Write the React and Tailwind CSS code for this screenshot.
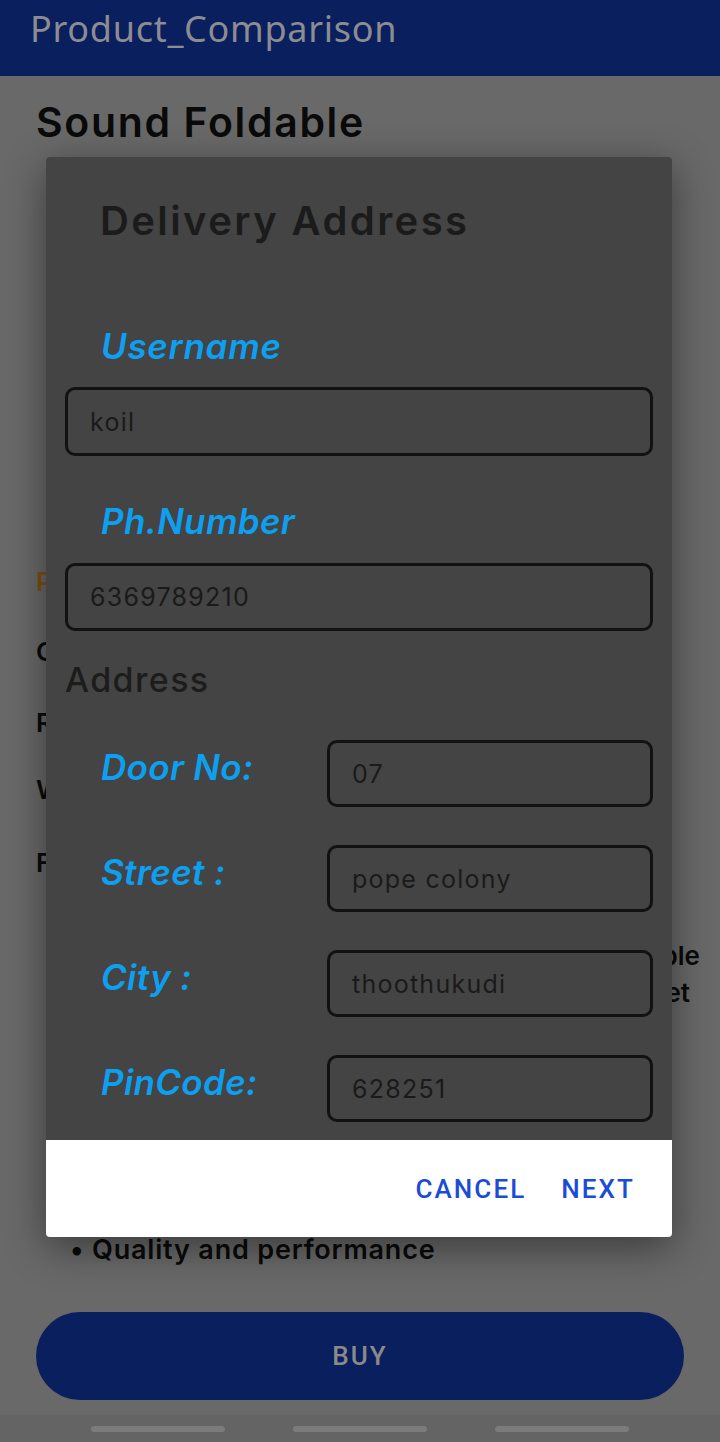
import { useState } from 'react';

// Specs rows sitting behind the dialog (only first letters peek out)
const specs = [
    { label: 'Price : Rs. 1,299', color: 'text-[#7d5010]', mt: 'mt-[24px]' },
    { label: 'Colour : Black', color: 'text-[#0a0a0a]', mt: 'mt-[44px]' },
    { label: 'Rating : 4.1', color: 'text-[#0a0a0a]', mt: 'mt-[45px]' },
    { label: 'Weight : 180g', color: 'text-[#0a0a0a]', mt: 'mt-[41px]' },
    { label: 'Features :', color: 'text-[#0a0a0a]', mt: 'mt-[47px]' },
];

const addressRows = [
    { key: 'door', label: 'Door No:' },
    { key: 'street', label: 'Street :' },
    { key: 'city', label: 'City :' },
    { key: 'pin', label: 'PinCode:' },
];

export default function App() {
    // Form values for the delivery address dialog
    const [form, setForm] = useState({
        username: 'koil',
        phone: '6369789210',
        door: '07',
        street: 'pope colony',
        city: 'thoothukudi',
        pin: '628251',
    });
    const [showDialog, setShowDialog] = useState(true);

    const update = (key) => (e) => setForm((prev) => ({ ...prev, [key]: e.target.value }));

    const inputClass =
        "w-full bg-transparent border-[3px] border-[#121212] rounded-[10px] px-[22px] text-[25px] tracking-[0.05em] text-[#1a1a1a] outline-none font-['Inter',sans-serif]";

    return (
        <div className="relative flex h-[1442px] flex-col overflow-hidden bg-[#696969] font-['Inter',sans-serif] text-[#0a0a0a]">
            {/* App bar */}
            <header className="relative z-10 flex h-[76px] shrink-0 items-start bg-[#0a1f5e] px-[30px] pt-[11px]">
                <h1 className="font-['Noto_Sans',sans-serif] text-[36px] leading-none tracking-[0.02em] text-[#8c8d92]">
                    Product_Comparison
                </h1>
            </header>

            {/* Product page (dimmed behind the dialog) */}
            <main className="flex flex-1 flex-col px-[36px]">
                <h2 className="mt-[26px] text-[41px] font-semibold leading-none tracking-[0.04em]">Sound Foldable</h2>
                <div className="mt-[22px] h-[380px]" />

                {specs.map((s) => (
                    <p key={s.label} className={`${s.mt} ${s.color} text-[26px] font-semibold leading-none`}>
                        {s.label}
                    </p>
                ))}

                <p className="mt-[67px] -mr-[16px] text-right text-[26px] font-semibold leading-none">• Foldable and comfortable</p>
                <p className="mt-[11px] -mr-[6px] text-right text-[26px] font-semibold leading-none">• Lightweight headset</p>

                <p className="mt-[230px] pl-[34px] text-[27px] font-semibold leading-none tracking-[0.03em]">• Quality and performance</p>

                <button className="mt-[49px] flex h-[88px] w-full items-center justify-center rounded-full bg-[#0a1f5e]">
                    <span className="font-['Roboto',sans-serif] text-[26px] font-medium leading-none tracking-[0.08em] text-[#8a8a8a]">BUY</span>
                </button>
            </main>

            {/* System navigation bar */}
            <nav className="flex h-[27px] shrink-0 items-center justify-between bg-[#646464] px-[91px]">
                <span className="h-[6px] w-[134px] rounded-full bg-[#7c7c7c]" />
                <span className="h-[6px] w-[134px] rounded-full bg-[#7c7c7c]" />
                <span className="h-[6px] w-[134px] rounded-full bg-[#7c7c7c]" />
            </nav>

            {/* Delivery address dialog */}
            {showDialog && (
                <div className="absolute inset-0 z-20 flex items-start pl-[46px] pt-[157px]">
                    <div className="w-[626px] overflow-hidden rounded-[4px] shadow-[0_10px_40px_rgba(0,0,0,0.45)]">
                        <div className="flex flex-col bg-[#444444] px-[19px] pt-[44px] pb-[18px]">
                            <h3 className="ml-[35px] text-[40px] font-semibold leading-none tracking-[0.06em] text-[#1b1b1b]">
                                Delivery Address
                            </h3>

                            <label className="mt-[88px] ml-[36px] text-[35px] font-semibold italic leading-none tracking-[0.02em] text-[#0d9ff0]">
                                Username
                            </label>
                            <input className={`mt-[23px] h-[69px] ${inputClass}`} value={form.username} onChange={update('username')} />

                            <label className="mt-[48px] ml-[36px] text-[35px] font-semibold italic leading-none tracking-[0.01em] text-[#0d9ff0]">
                                Ph.Number
                            </label>
                            <input className={`mt-[24px] h-[68px] ${inputClass}`} value={form.phone} onChange={update('phone')} />

                            <h4 className="mt-[32px] text-[34px] font-medium leading-none tracking-[0.04em] text-[#1c1c1c]">Address</h4>

                            <div className="mt-[43px] flex flex-col gap-[38px]">
                                {addressRows.map((row) => (
                                    <div key={row.key} className="flex h-[67px] items-center">
                                        <label className="mb-[12px] w-[262px] shrink-0 pl-[36px] text-[35px] font-semibold italic leading-none tracking-[0.01em] text-[#0d9ff0]">
                                            {row.label}
                                        </label>
                                        <input className={`h-[67px] ${inputClass}`} value={form[row.key]} onChange={update(row.key)} />
                                    </div>
                                ))}
                            </div>
                        </div>

                        {/* Dialog buttons */}
                        <div className="flex h-[97px] items-center justify-end gap-[35px] bg-white pr-[37px]">
                            <button
                                onClick={() => setShowDialog(false)}
                                className="font-['Roboto',sans-serif] text-[26px] font-medium leading-none tracking-[0.08em] text-[#1b4cd6]"
                            >
                                CANCEL
                            </button>
                            <button className="font-['Roboto',sans-serif] text-[26px] font-medium leading-none tracking-[0.08em] text-[#1b4cd6]">
                                NEXT
                            </button>
                        </div>
                    </div>
                </div>
            )}
        </div>
    );
}
